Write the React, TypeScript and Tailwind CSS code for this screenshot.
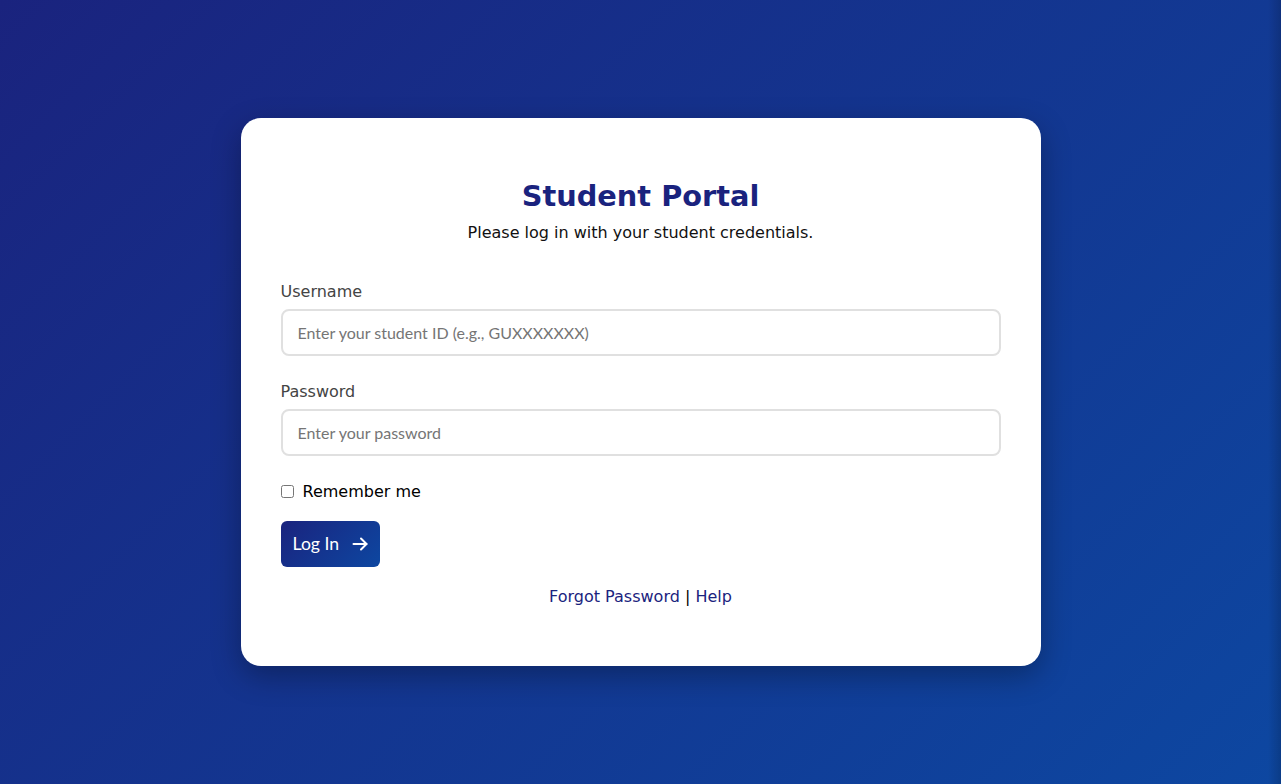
import React, { useState } from 'react'

const ArrowIcon: React.FC = () => (
  <svg width="16" height="14" viewBox="0 0 16 14" fill="none" stroke="currentColor" strokeWidth="2" strokeLinecap="round" strokeLinejoin="round">
    <path d="M1.5 7h13" />
    <path d="M9 1.5L14.5 7 9 12.5" />
  </svg>
)

const App: React.FC = () => {
  const [username, setUsername] = useState('')
  const [password, setPassword] = useState('')
  const [remember, setRemember] = useState(false)

  return (
    <div className="min-h-screen flex items-center justify-center bg-[linear-gradient(to_left,rgba(0,0,0,0.16),rgba(0,0,0,0)_13px),linear-gradient(135deg,#1a237e,#0d47a1)] font-['DejaVu_Sans',sans-serif]">
      <div className="w-[800px] bg-white rounded-[20px] shadow-[0_10px_30px_rgba(0,0,0,0.3)] px-10 pt-[61px] pb-[57px]">
        {/* Header */}
        <div className="text-center mb-[35px]">
          <h1 className="text-[28.8px] leading-[1.2] font-bold text-[#1a237e] mb-[7px]">Student Portal</h1>
          <p className="text-base leading-6 text-[#111]">Please log in with your student credentials.</p>
        </div>

        <form onSubmit={(e) => e.preventDefault()}>
          <div className="mb-[24px]">
            <label className="block text-base leading-6 text-[#444] mb-[5px]">Username</label>
            <input
              type="text"
              value={username}
              onChange={(e) => setUsername(e.target.value)}
              placeholder="Enter your student ID (e.g., GUXXXXXXX)"
              className="w-full border-2 border-[#e0e0e0] rounded-lg px-[15px] py-3 text-base leading-[1.2] font-['Lato',sans-serif] text-[#333] placeholder:text-[#757575] outline-none"
            />
          </div>

          <div className="mb-[24px]">
            <label className="block text-base leading-6 text-[#444] mb-[5px]">Password</label>
            <input
              type="password"
              value={password}
              onChange={(e) => setPassword(e.target.value)}
              placeholder="Enter your password"
              className="w-full border-2 border-[#e0e0e0] rounded-lg px-[15px] py-3 text-base leading-[1.2] font-['Lato',sans-serif] text-[#333] placeholder:text-[#757575] outline-none"
            />
          </div>

          <div className="flex items-center gap-[9px] mb-[17px]">
            <input
              type="checkbox"
              checked={remember}
              onChange={(e) => setRemember(e.target.checked)}
              className="w-[13px] h-[13px]"
            />
            <span className="text-base leading-6 text-black">Remember me</span>
          </div>

          <button
            type="submit"
            className="flex items-center gap-[13px] h-[46px] px-3 rounded-md bg-[linear-gradient(135deg,#1a237e,#0d47a1)] text-white text-[17.6px] font-['Lato',sans-serif]"
          >
            Log In
            <ArrowIcon />
          </button>

          <p className="text-center mt-[18px] text-base leading-6 text-black">
            <a href="#" className="text-[#1a237e]">Forgot Password</a> | <a href="#" className="text-[#1a237e]">Help</a>
          </p>
        </form>
      </div>
    </div>
  )
}

export default App
